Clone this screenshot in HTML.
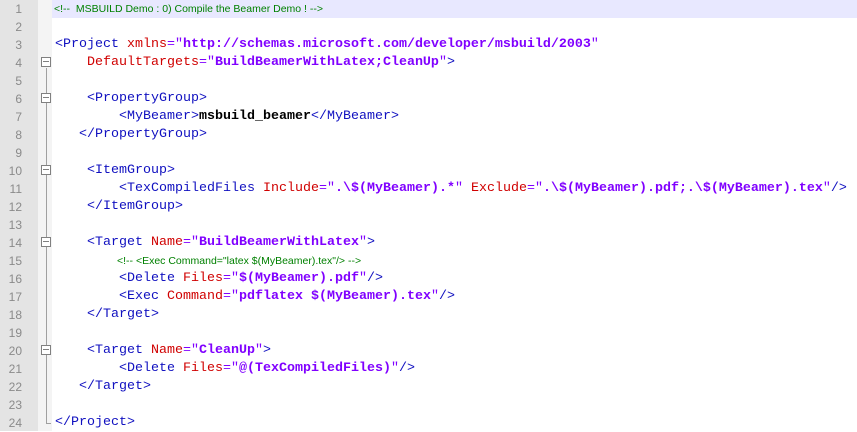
<!DOCTYPE html>
<html><head><style>
body{margin:0;width:857px;height:431px;overflow:hidden;background:#fff;position:relative;font-family:"Liberation Mono",monospace;font-size:13.33px}
#gut{position:absolute;left:0;top:0;width:38px;height:431px;background:#e4e4e4}
#fold{position:absolute;left:38px;top:0;width:14px;height:431px;background:#f4f4f4}
.n{position:absolute;left:0;width:22px;text-align:right;color:#8a8a8a;font-family:"Liberation Sans",sans-serif;font-size:12px;height:18px;line-height:18px}
.l{position:absolute;white-space:pre;height:18px;line-height:18px}
.t{color:#1010c0}.a{color:#d00000}.v{color:#8000ff;font-weight:bold}.q{color:#8000ff}.b{font-weight:bold;color:#000}
.c{color:#008000;font-family:"Liberation Sans",sans-serif;font-size:10.5px}
.box{position:absolute;left:41px;width:8px;height:8px;border:1px solid #808080;background:#fff}
.box:after{content:"";position:absolute;left:1px;top:3px;width:6px;height:1px;background:#808080}
.vl{position:absolute;left:46px;width:1px;background:#a0a0a0}
</style></head><body>
<div id="gut"></div><div id="fold"></div>
<div style="position:absolute;left:52px;top:0;width:805px;height:18px;background:#e8e8ff"></div>
<div class="vl" style="top:68px;height:356px"></div>
<div style="position:absolute;left:46px;top:423px;width:5px;height:1px;background:#a0a0a0"></div>
<div class="box" style="top:57px"></div>
<div class="box" style="top:93px"></div>
<div class="box" style="top:165px"></div>
<div class="box" style="top:237px"></div>
<div class="box" style="top:345px"></div>
<div class="n" style="top:0">1</div><div class="n" style="top:18px">2</div><div class="n" style="top:36px">3</div><div class="n" style="top:54px">4</div><div class="n" style="top:72px">5</div><div class="n" style="top:90px">6</div><div class="n" style="top:108px">7</div><div class="n" style="top:126px">8</div><div class="n" style="top:144px">9</div><div class="n" style="top:162px">10</div><div class="n" style="top:180px">11</div><div class="n" style="top:198px">12</div><div class="n" style="top:216px">13</div><div class="n" style="top:234px">14</div><div class="n" style="top:252px">15</div><div class="n" style="top:270px">16</div><div class="n" style="top:288px">17</div><div class="n" style="top:306px">18</div><div class="n" style="top:324px">19</div><div class="n" style="top:342px">20</div><div class="n" style="top:360px">21</div><div class="n" style="top:378px">22</div><div class="n" style="top:396px">23</div><div class="n" style="top:414px">24</div>
<div class="l c" style="left:54px;top:0">&lt;!--  MSBUILD Demo : 0) Compile the Beamer Demo ! --&gt;</div>
<div class="l" style="left:55px;top:36px"><span class="t">&lt;Project</span> <span class="a">xmlns</span><span class="q">="</span><span class="v">http://schemas.microsoft.com/developer/msbuild/2003</span><span class="q">"</span></div>
<div class="l" style="left:87px;top:54px"><span class="a">DefaultTargets</span><span class="q">="</span><span class="v">BuildBeamerWithLatex;CleanUp</span><span class="q">"</span><span class="t">&gt;</span></div>
<div class="l t" style="left:87px;top:90px">&lt;PropertyGroup&gt;</div>
<div class="l" style="left:119px;top:108px"><span class="t">&lt;MyBeamer&gt;</span><span class="b">msbuild_beamer</span><span class="t">&lt;/MyBeamer&gt;</span></div>
<div class="l t" style="left:79px;top:126px">&lt;/PropertyGroup&gt;</div>
<div class="l t" style="left:87px;top:162px">&lt;ItemGroup&gt;</div>
<div class="l" style="left:119px;top:180px"><span class="t">&lt;TexCompiledFiles</span> <span class="a">Include</span><span class="q">="</span><span class="v">.\$(MyBeamer).*</span><span class="q">"</span> <span class="a">Exclude</span><span class="q">="</span><span class="v">.\$(MyBeamer).pdf;.\$(MyBeamer).tex</span><span class="q">"</span><span class="t">/&gt;</span></div>
<div class="l t" style="left:87px;top:198px">&lt;/ItemGroup&gt;</div>
<div class="l" style="left:87px;top:234px"><span class="t">&lt;Target</span> <span class="a">Name</span><span class="q">="</span><span class="v">BuildBeamerWithLatex</span><span class="q">"</span><span class="t">&gt;</span></div>
<div class="l c" style="left:117px;top:252px">&lt;!-- &lt;Exec Command="latex $(MyBeamer).tex"/&gt; --&gt;</div>
<div class="l" style="left:119px;top:270px"><span class="t">&lt;Delete</span> <span class="a">Files</span><span class="q">="</span><span class="v">$(MyBeamer).pdf</span><span class="q">"</span><span class="t">/&gt;</span></div>
<div class="l" style="left:119px;top:288px"><span class="t">&lt;Exec</span> <span class="a">Command</span><span class="q">="</span><span class="v">pdflatex $(MyBeamer).tex</span><span class="q">"</span><span class="t">/&gt;</span></div>
<div class="l t" style="left:87px;top:306px">&lt;/Target&gt;</div>
<div class="l" style="left:87px;top:342px"><span class="t">&lt;Target</span> <span class="a">Name</span><span class="q">="</span><span class="v">CleanUp</span><span class="q">"</span><span class="t">&gt;</span></div>
<div class="l" style="left:119px;top:360px"><span class="t">&lt;Delete</span> <span class="a">Files</span><span class="q">="</span><span class="v">@(TexCompiledFiles)</span><span class="q">"</span><span class="t">/&gt;</span></div>
<div class="l t" style="left:79px;top:378px">&lt;/Target&gt;</div>
<div class="l t" style="left:55px;top:414px">&lt;/Project&gt;</div>
</body></html>
